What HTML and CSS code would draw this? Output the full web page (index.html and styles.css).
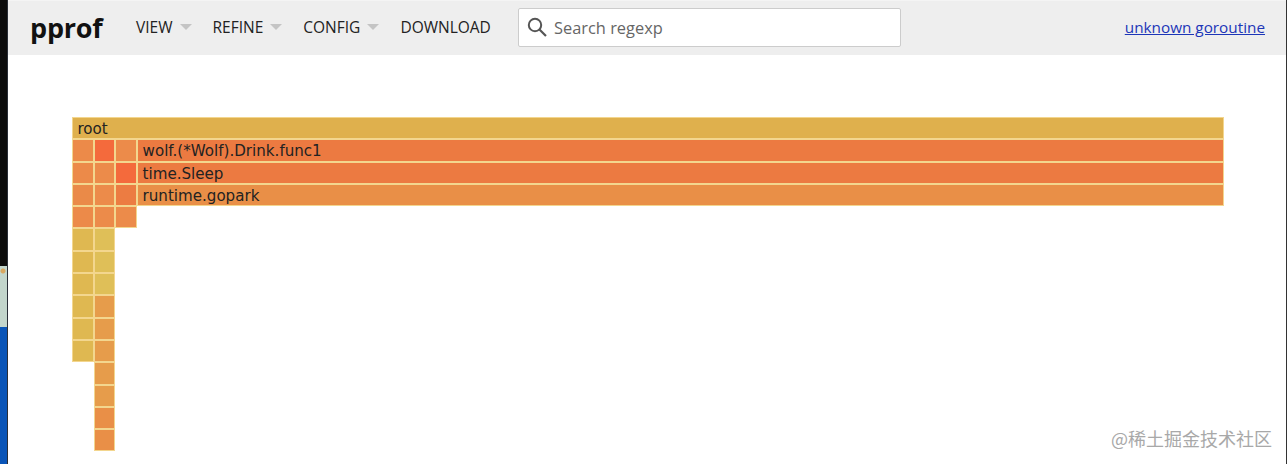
FILE: index.html
```html
<!DOCTYPE html>
<html lang="en">
<head>
    <meta charset="UTF-8">
    <title>pprof</title>
    <link rel="stylesheet" href="styles.css">
</head>
<body>
    <div class="desktop-strip">
        <div class="desktop-strip__dark"></div>
        <div class="desktop-strip__light"></div>
        <div class="desktop-strip__blue"></div>
    </div>

    <div class="page">
        <header class="header">
            <div class="header__title">pprof</div>
            <nav class="menu">
                <span class="menu__item menu__item--drop">VIEW</span>
                <span class="menu__item menu__item--drop">REFINE</span>
                <span class="menu__item menu__item--drop">CONFIG</span>
                <span class="menu__item">DOWNLOAD</span>
            </nav>
            <div class="search">
                <svg class="search__icon" width="22" height="22" viewBox="0 0 22 22">
                    <circle cx="9" cy="9" r="6.2" fill="none" stroke="#555" stroke-width="2"/>
                    <path d="M13.5 13.5 L20 20" stroke="#555" stroke-width="2.2" fill="none"/>
                </svg>
                <span class="search__text">Search regexp</span>
            </div>
            <a class="header__link" href="#">unknown goroutine</a>
        </header>

        <main class="flame">
            <div class="flame__row"><div class="box box--wide c-root">root</div></div>
            <div class="flame__row">
                <div class="box c-o1"></div><div class="box c-r1"></div><div class="box c-o2"></div>
                <div class="box box--wide c-r2">wolf.(*Wolf).Drink.func1</div>
            </div>
            <div class="flame__row">
                <div class="box c-o1"></div><div class="box c-o2"></div><div class="box c-r1"></div>
                <div class="box box--wide c-r2">time.Sleep</div>
            </div>
            <div class="flame__row">
                <div class="box c-o3"></div><div class="box c-o2"></div><div class="box c-r3"></div>
                <div class="box box--wide c-o4">runtime.gopark</div>
            </div>
            <div class="flame__row">
                <div class="box c-o1"></div><div class="box c-o2"></div><div class="box c-o2"></div>
            </div>
            <div class="flame__row"><div class="box c-y1"></div><div class="box c-y2"></div></div>
            <div class="flame__row"><div class="box c-y1"></div><div class="box c-y2"></div></div>
            <div class="flame__row"><div class="box c-y1"></div><div class="box c-y2"></div></div>
            <div class="flame__row"><div class="box c-y1"></div><div class="box c-o5"></div></div>
            <div class="flame__row"><div class="box c-y1"></div><div class="box c-o5"></div></div>
            <div class="flame__row"><div class="box c-y1"></div><div class="box c-o5"></div></div>
            <div class="flame__row"><div class="box box--empty"></div><div class="box c-o5"></div></div>
            <div class="flame__row"><div class="box box--empty"></div><div class="box c-o5"></div></div>
            <div class="flame__row"><div class="box box--empty"></div><div class="box c-o4"></div></div>
            <div class="flame__row"><div class="box box--empty"></div><div class="box c-o4"></div></div>
        </main>
    </div>

    <div class="watermark">@稀土掘金技术社区</div>
</body>
</html>
```

FILE: styles.css
```css
html, body{
    margin: 0;
    height: 100%;
}
body{
    display: flex;
    height: 464px;
    overflow: hidden;
    background: #fff;
    border-right: 1px solid #333;
    box-sizing: border-box;
    font-family: "Open Sans", "Noto Sans", sans-serif;
}
.desktop-strip{
    width: 7px;
    border-right: 1px solid #2a2f38;
    display: flex;
    flex-direction: column;
    flex: none;
}
.desktop-strip__dark{
    height: 266px;
    background: #0c0c0c;
}
.desktop-strip__light{
    height: 61px;
    background: radial-gradient(circle at 3px 5px, #d9a860 2px, transparent 3px), #c3d6cc;
}
.desktop-strip__blue{
    flex: 1;
    background: #0a55b8;
}
.page{
    flex: 1;
    min-width: 0;
}
.header{
    height: 55px;
    box-sizing: border-box;
    background: #eee;
    border-top: 1px solid #f4f4f4;
    display: flex;
    align-items: center;
    padding: 0 21px 2px 22px;
}
.header__title{
    font-size: 27px;
    font-weight: 700;
    color: #111;
    width: 106px;
    letter-spacing: -.2px;
}
.menu{
    display: flex;
    gap: 21px;
    width: 382px;
}
.menu__item{
    font-size: 15.5px;
    color: #222;
    display: flex;
    align-items: center;
}
.menu__item--drop::after{
    content: "";
    margin-left: 7px;
    border: 6px solid transparent;
    border-top: 6px solid #c4c4c4;
    border-bottom: 0;
}
.search{
    width: 383px;
    height: 39px;
    box-sizing: border-box;
    background: #fff;
    border: 1px solid #ccc;
    border-radius: 2px;
    display: flex;
    align-items: center;
    padding-left: 7px;
    gap: 6px;
}
.search__text{
    font-size: 16.4px;
    color: #666;
}
.header__link{
    margin-left: auto;
    font-size: 15.3px;
    color: #1c36b8;
}
.flame{
    padding: 62px 0 0 64px;
}
.flame__row{
    display: flex;
    width: 1152px;
    height: 22.3px;
}
.box{
    width: 21.7px;
    flex: none;
    box-sizing: border-box;
    border: 1px solid #f3d68e;
    font-family: "DejaVu Sans", sans-serif;
    font-size: 15.1px;
    line-height: 22px;
    color: #222;
    white-space: nowrap;
}
.box--wide{
    flex: 1;
    padding-left: 4.5px;
}
.box--empty{
    border: 0;
}
.c-root{ background: #dfb04d; }
.c-r1{ background: #f46a3c; }
.c-r2{ background: #ec7a41; }
.c-r3{ background: #ec7c42; }
.c-o1{ background: #ec8a49; }
.c-o2{ background: #ec8b4a; }
.c-o3{ background: #ea8a48; }
.c-o4{ background: #e98f47; }
.c-o5{ background: #e69c4b; }
.c-y1{ background: #dfb851; }
.c-y2{ background: #dfbf58; }
.watermark{
    position: absolute;
    right: 15px;
    bottom: 14px;
    font-family: "Noto Sans CJK SC", sans-serif;
    font-size: 18px;
    line-height: 24px;
    color: #a8a8a8;
}
```
